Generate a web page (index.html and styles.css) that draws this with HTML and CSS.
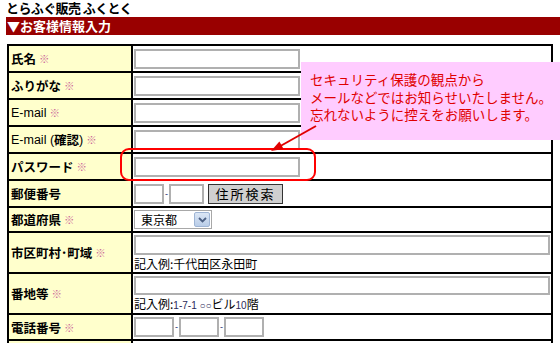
FILE: index.html
```html
<!DOCTYPE html>
<html lang="ja">
<head>
<meta charset="utf-8">
<title>お客様情報入力</title>
<link rel="stylesheet" href="styles.css">
</head>
<body>
<div class="page">
  <div class="site-title">とらふぐ販売 ふくとく</div>
  <h2 class="section-head">▼お客様情報入力</h2>
  <div class="form">
    <div class="lbl">氏名<span class="req">※</span></div>
    <div class="val"><input class="txt" type="text"></div>

    <div class="lbl">ふりがな<span class="req">※</span></div>
    <div class="val"><input class="txt" type="text"></div>

    <div class="lbl"><span class="latin">E-mail</span><span class="req">※</span></div>
    <div class="val"><input class="txt" type="text"></div>

    <div class="lbl"><span class="latin">E-mail (</span>確認<span class="latin">)</span><span class="req">※</span></div>
    <div class="val"><input class="txt" type="text"></div>

    <div class="lbl">パスワード<span class="req">※</span></div>
    <div class="val"><input class="txt" type="password"></div>

    <div class="lbl">郵便番号</div>
    <div class="val"><input class="txt zip1" type="text"><span class="dash">-</span><input class="txt zip2" type="text"><button class="btn" type="button">住所検索</button></div>

    <div class="lbl">都道府県<span class="req">※</span></div>
    <div class="val">
      <div class="sel"><span class="sel-text">東京都</span><span class="sel-arrow"><svg width="9" height="6" viewBox="0 0 9 6"><path d="M1 1 L4.5 4.5 L8 1" fill="none" stroke="#4d6185" stroke-width="1.8"/></svg></span></div>
    </div>

    <div class="lbl">市区町村･町域<span class="req">※</span></div>
    <div class="val col"><input class="txt wide" type="text"><div class="ex">記入例:千代田区永田町</div></div>

    <div class="lbl">番地等<span class="req">※</span></div>
    <div class="val col"><input class="txt wide" type="text"><div class="ex">記入例:<span class="sm">1-7-1 ○○</span>ビル<span class="sm">10</span>階</div></div>

    <div class="lbl">電話番号<span class="req">※</span></div>
    <div class="val"><input class="txt tel" type="text"><span class="dash">-</span><input class="txt tel" type="text"><span class="dash">-</span><input class="txt tel" type="text"></div>

    <div class="lbl"></div>
    <div class="val"></div>
  </div>

  <div class="callout">
    <div class="cl-line">セキュリティ保護の観点から</div>
    <div class="cl-line">メールなどではお知らせいたしません。</div>
    <div class="cl-line">忘れないように控えをお願いします。</div>
  </div>
  <div class="pw-ring"></div>
  <svg class="arrow" width="560" height="343" viewBox="0 0 560 343">
    <line x1="316" y1="126" x2="276" y2="148.5" stroke="#e00000" stroke-width="2"/>
    <polygon points="271,151 283.6,149 279.4,141.4" fill="#e00000"/>
  </svg>
</div>
</body>
</html>
```
FILE: styles.css
```css
html, body {
  margin: 0;
  padding: 0;
  overflow: hidden;
  background: #fff;
}
body {
  font-family: "Noto Sans CJK JP", sans-serif;
  font-size: 12px;
  color: #000;
}
.page {
  position: relative;
  width: 560px;
  height: 343px;
}
.site-title {
  height: 17px;
  padding-left: 6px;
  font-size: 13px;
  font-weight: bold;
  line-height: 16px;
  letter-spacing: -0.6px;
}
.section-head {
  margin: 0 0 0 6px;
  height: 18px;
  padding-left: 1px;
  background: #990000;
  color: #fff;
  font-size: 13px;
  font-weight: bold;
  line-height: 18px;
}
.form {
  margin: 9px 0 0 7px;
  width: 546px;
  box-sizing: border-box;
  display: grid;
  grid-template-columns: 124px 420px;
  grid-template-rows: 27px 27px 27px 27px 27px 27px 25px 41px 41px 26px 27px;
  border-top: 2px solid #000;
  border-left: 2px solid #000;
}
.lbl, .val {
  box-sizing: border-box;
  border-right: 2px solid #000;
  border-bottom: 2px solid #000;
  display: flex;
  align-items: center;
}
.lbl {
  background: #ffffcc;
  padding-left: 2px;
  font-weight: bold;
  font-size: 12.5px;
  white-space: nowrap;
}
.latin {
  font-family: "Liberation Sans", Arial, sans-serif;
  font-weight: normal;
  font-size: 12.5px;
}
.req {
  margin-left: 3px;
  color: #cc6699;
  font-size: 10.5px;
  font-weight: bold;
}
.val {
  background: #fff;
  padding: 0 1px;
}
.val.col {
  flex-direction: column;
  align-items: flex-start;
  justify-content: flex-start;
  padding-top: 2px;
}
.txt {
  box-sizing: border-box;
  width: 166px;
  height: 20px;
  margin: 0;
  padding: 0;
  border: 2px solid #b0b0b0;
  background: #fff;
}
.txt.wide { width: 416px; }
.txt.zip1 { width: 30px; }
.txt.zip2 { width: 35px; }
.txt.tel { width: 40px; }
.dash {
  display: inline-block;
  width: 5px;
  text-align: center;
  font-family: "Liberation Sans", sans-serif;
  font-size: 9px;
  color: #1a2a6a;
}
.btn {
  box-sizing: border-box;
  width: 75px;
  height: 20px;
  margin: 0 0 0 4px;
  padding: 0;
  background: #d0d0d0;
  border: 1px solid #333;
  font-family: "Noto Sans CJK JP", sans-serif;
  font-size: 13px;
  letter-spacing: 2px;
  line-height: 17px;
  color: #000;
}
.sel {
  box-sizing: border-box;
  width: 78px;
  height: 19px;
  display: flex;
  align-items: center;
  border: 1px solid #a8a8a8;
  background: #fff;
  padding: 1px;
}
.sel-text {
  flex: 1;
  padding-left: 5px;
  font-size: 12px;
  line-height: 15px;
}
.sel-arrow {
  box-sizing: border-box;
  width: 16px;
  height: 15px;
  display: flex;
  align-items: center;
  justify-content: center;
  background: linear-gradient(#dbe6f5, #b9cde8);
  border: 1px solid #9fb5d5;
  border-radius: 2px;
}
.ex {
  margin-top: 1px;
  font-size: 12px;
  line-height: 15px;
  white-space: nowrap;
}
.sm {
  font-family: "Liberation Sans", sans-serif;
  font-size: 10px;
  color: #2a2a5a;
}
.callout {
  position: absolute;
  left: 301px;
  top: 62px;
  width: 259px;
  height: 78px;
  box-sizing: border-box;
  padding: 9px 0 0 9px;
  background: #ffccff;
  color: #e00000;
  font-size: 13.5px;
  white-space: nowrap;
}
.cl-line {
  height: 17.5px;
  line-height: 17.5px;
}
.pw-ring {
  position: absolute;
  left: 120px;
  top: 148px;
  width: 196px;
  height: 33px;
  box-sizing: border-box;
  border: 2px solid #ff0000;
  border-radius: 9px;
}
.arrow {
  position: absolute;
  left: 0;
  top: 0;
  pointer-events: none;
}
```
